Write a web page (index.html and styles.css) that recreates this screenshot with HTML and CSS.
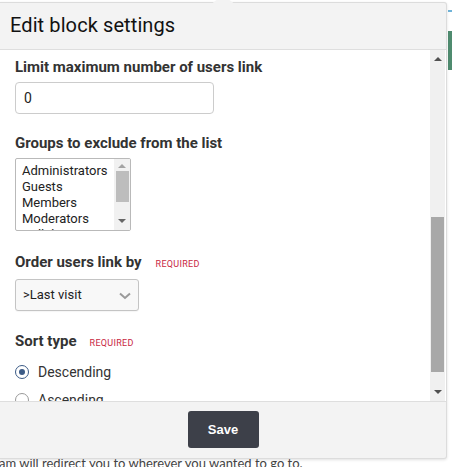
FILE: index.html
```html
<!DOCTYPE html>
<html>
<head>
<meta charset="utf-8">
<link rel="stylesheet" href="styles.css">
</head>
<body>
<div class="page">
  <div class="page-strip"><span class="strip-blue"></span><span class="strip-green"></span></div>
  <p class="page-text">am will redirect you to wherever you wanted to go to.</p>
</div>
<div class="modal">
  <div class="modal-notch"></div>
  <div class="modal-header">Edit block settings</div>
  <div class="modal-body">
    <div class="content">
      <div class="field f1">
        <div class="label">Limit maximum number of users link</div>
        <div class="input">0</div>
      </div>
      <div class="field f2">
        <div class="label">Groups to exclude from the list</div>
        <div class="multi">
          <div class="options">
            <div>Administrators</div>
            <div>Guests</div>
            <div>Members</div>
            <div>Moderators</div>
            <div>Collaborators</div>
          </div>
          <div class="mini-bar">
            <span class="arrow up small"></span>
            <span class="mini-thumb"></span>
            <span class="arrow down small"></span>
          </div>
        </div>
      </div>
      <div class="field f3">
        <div class="label">Order users link by <span class="req">REQUIRED</span></div>
        <div class="select">&gt;Last visit
          <svg class="chev" width="12" height="8" viewBox="0 0 12 8"><path d="M1 1.5 L6 6 L11 1.5" fill="none" stroke="#9a9a9a" stroke-width="2"/></svg>
        </div>
      </div>
      <div class="field f4">
        <div class="label">Sort type <span class="req">REQUIRED</span></div>
        <div class="radios">
          <div class="radio"><span class="dot on"></span>Descending</div>
          <div class="radio"><span class="dot"></span>Ascending</div>
        </div>
      </div>
    </div>
    <div class="vbar">
      <span class="arrow up"></span>
      <span class="vtrack"><span class="vthumb"></span></span>
      <span class="arrow down"></span>
    </div>
  </div>
  <div class="modal-footer"><button class="save">Save</button></div>
</div>
</body>
</html>
```
FILE: styles.css
```css
html, body { margin: 0; padding: 0; background: #fff; }
body { width: 452px; height: 467px; overflow: hidden; position: relative; font-family: Roboto, "Liberation Sans", sans-serif; }

.page { height: 467px; position: relative; }
.page-strip { position: absolute; left: 448px; top: 0; width: 4px; height: 100px; }
.strip-blue { position: absolute; top: 10px; left: 0; width: 4px; height: 2px; background: #6fb3d8; }
.strip-green { position: absolute; top: 31px; left: 0; width: 4px; height: 39px; background: #4f8b6f; }
.page-text { position: absolute; left: -1px; top: 453px; margin: 0; font-size: 13px; line-height: 20px; color: #444; white-space: nowrap; font-family: Lato, Roboto, sans-serif; }

.modal {
  position: absolute; left: -1px; top: 2px; width: 448px; height: 457px;
  display: flex; flex-direction: column;
  background: #f3f3f3; border: 1px solid #dcdcdc; border-left: none; border-radius: 0 3px 3px 0;
  box-shadow: 0 1px 3px rgba(0,0,0,0.12);
  box-sizing: border-box;
}
.modal-notch { position: absolute; top: -3px; left: 211px; width: 26px; height: 5px; background: #f3f3f3; clip-path: polygon(0 100%, 25% 0, 75% 0, 100% 100%); }
.modal-header {
  height: 47px; flex: none; box-sizing: border-box;
  padding: 10px 0 0 11px; font-size: 20px; color: #111; letter-spacing: 0.1px;
  border-bottom: 1px solid #dedede;
}
.modal-body { height: 351px; flex: none; display: flex; background: #fff; overflow: hidden; }
.content { flex: 1; padding: 7px 0 0 16px; color: #333; }
.f1 { margin-bottom: 19px; }
.f2 { margin-bottom: 21px; }
.f3 { margin-bottom: 20px; }
.label { font-size: 15px; font-weight: 700; line-height: 20px; color: #333; margin-bottom: 5px; display: flex; align-items: baseline; }
.req { font-size: 9px; font-weight: 400; color: #c8283f; margin-left: 14px; letter-spacing: 0.3px; }
.f4 .req { margin-left: 13px; }
.input {
  width: 199px; height: 32px; box-sizing: border-box; border: 1px solid #ccc; border-radius: 4px;
  padding: 0 8px; font-size: 14px; line-height: 30px; color: #222;
}
.multi { width: 116px; height: 73px; box-sizing: border-box; border: 1px solid #b9b9b9; border-radius: 2px; display: flex; overflow: hidden; }
.options { flex: 1; padding: 4px 0 0 6px; font-size: 13px; line-height: 16px; color: #222; overflow: hidden; }
.mini-bar { width: 16px; background: #f1f1f1; display: flex; flex-direction: column; align-items: center; }
.mini-thumb { width: 13px; height: 31px; background: #bdbdbd; margin-top: 3px; margin-bottom: auto; }
.arrow { width: 0; height: 0; border-left: 4px solid transparent; border-right: 4px solid transparent; flex: none; }
.arrow.up { border-bottom: 4px solid #505050; margin-top: 6px; }
.arrow.down { border-top: 4px solid #505050; margin-bottom: 6px; }
.arrow.small.up { border-bottom-color: #a3a3a3; margin-top: 5px; }
.arrow.small.down { border-top-color: #666; margin-bottom: 7px; }
.select {
  width: 124px; height: 32px; box-sizing: border-box; border: 1px solid #c4c4c4; border-radius: 3px;
  background: #f8f8f8; padding: 0 7px; font-size: 13px; line-height: 30px; color: #222; position: relative;
  box-shadow: 0 1px 1px rgba(0,0,0,0.04);
}
.chev { position: absolute; right: 7px; top: 12px; }
.radios { padding-top: 0; }
.radio { display: flex; align-items: center; height: 28px; font-size: 14px; color: #333; }
.dot { width: 14px; height: 14px; box-sizing: border-box; border: 1px solid #9a9a9a; border-radius: 50%; margin-right: 9px; position: relative; }
.dot.on { border: 1.5px solid #3c5b86; }
.dot.on::after { content: ""; position: absolute; left: 2.5px; top: 2.5px; width: 6px; height: 6px; border-radius: 50%; background: #3c5b86; }

.vbar { width: 15px; flex: none; background: #f0f0f0; display: flex; flex-direction: column; align-items: center; margin-right: 1px; }
.vtrack { flex: 1; width: 100%; position: relative; }
.vthumb { position: absolute; left: 1px; right: 1px; top: 156px; height: 155px; background: #a8a8a8; }
.vbar .arrow.up { margin-top: 7px; }
.vbar .arrow.down { margin-bottom: 7px; }

.modal-footer { flex: 1; border-top: 1px solid #dedede; display: flex; justify-content: center; align-items: flex-start; padding-top: 9px; padding-left: 0; }
.save {
  width: 71px; height: 37px; margin-left: 1px; border: none; border-radius: 3px; background: #3d4049;
  color: #fff; font-family: "Liberation Sans", Arial, sans-serif; font-weight: 700; font-size: 13px;
}
```
